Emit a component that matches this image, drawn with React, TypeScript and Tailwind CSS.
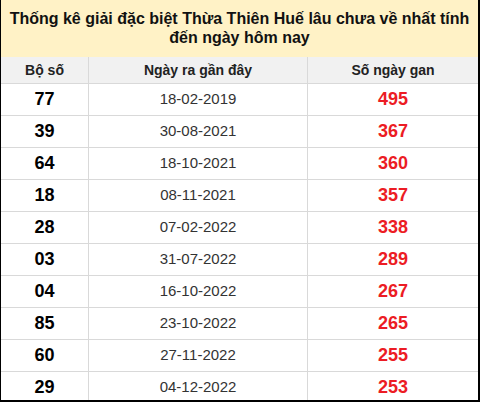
const ROWS = [
  { num: "77", date: "18-02-2019", gan: 495 },
  { num: "39", date: "30-08-2021", gan: 367 },
  { num: "64", date: "18-10-2021", gan: 360 },
  { num: "18", date: "08-11-2021", gan: 357 },
  { num: "28", date: "07-02-2022", gan: 338 },
  { num: "03", date: "31-07-2022", gan: 289 },
  { num: "04", date: "16-10-2022", gan: 267 },
  { num: "85", date: "23-10-2022", gan: 265 },
  { num: "60", date: "27-11-2022", gan: 255 },
  { num: "29", date: "04-12-2022", gan: 253 },
]

export default function App() {
  return (
    <div className="h-[402px] w-[480px] overflow-hidden border-r-2 border-b-2 border-l border-black bg-white font-['Liberation_Sans',Arial,sans-serif]">
      <div className="flex h-[57px] flex-col items-center justify-center bg-[#fff2c6] pb-[2px] text-center text-[16px] leading-[19px] font-bold text-[#111]">
        <span>Thống kê giải đặc biệt Thừa Thiên Huế lâu chưa về nhất tính</span>
        <span>đến ngày hôm nay</span>
      </div>
      <div className="grid h-[27px] grid-cols-[88px_219px_1fr] border-b border-[#d9d9d9] bg-[#f1f1f1] text-[14px] font-bold text-[#222]">
        <div className="flex items-center justify-center border-r border-[#d9d9d9]">Bộ số</div>
        <div className="flex items-center justify-center border-r border-[#d9d9d9]">Ngày ra gần đây</div>
        <div className="flex items-center justify-center">Số ngày gan</div>
      </div>
      {ROWS.map((row) => (
        <div
          key={row.num}
          className="grid h-[32px] grid-cols-[88px_219px_1fr] border-b border-[#d9d9d9]"
        >
          <div className="flex items-center justify-center border-r border-[#d9d9d9] text-[18px] font-bold text-black">
            {row.num}
          </div>
          <div className="flex items-center justify-center border-r border-[#d9d9d9] text-[15px] text-[#333]">
            {row.date}
          </div>
          <div className="flex items-center justify-center text-[18px] font-bold text-[#ec1c24]">
            {row.gan}
          </div>
        </div>
      ))}
    </div>
  )
}
